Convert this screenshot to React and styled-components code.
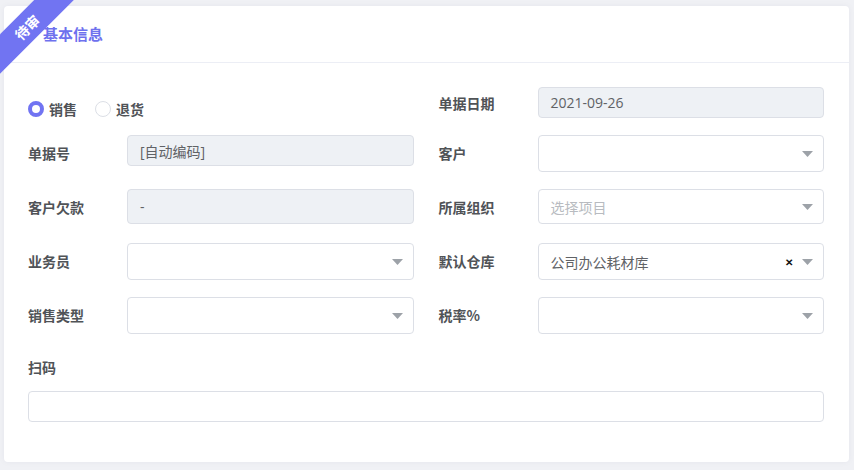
import styled, { createGlobalStyle } from 'styled-components';

const GlobalStyle = createGlobalStyle`
  html, body {
    margin: 0;
    padding: 0;
    background: #f0f1f5;
    overflow: hidden;
    font-family: "Noto Sans CJK SC", "Noto Sans", sans-serif;
  }
`;

const Page = styled.div`
  width: 854px;
  height: 470px;
  padding: 6px 5px 8px 4px;
  box-sizing: border-box;
`;

const Card = styled.section`
  position: relative;
  height: 456px;
  background: #fff;
  border-radius: 4px;
  box-shadow: 0 0 6px rgba(30, 40, 80, 0.05);
`;

const Ribbon = styled.div`
  position: absolute;
  left: -47.5px;
  top: 6.5px;
  width: 140px;
  height: 28px;
  background: #7174f2;
  transform: rotate(-45deg);
  display: flex;
  align-items: center;
  justify-content: center;
  color: #fff;
  font-size: 14px;
  font-weight: 700;
  z-index: 2;
`;

const Header = styled.header`
  height: 57px;
  padding-left: 39px;
  display: flex;
  align-items: center;
  border-bottom: 1px solid #eceef5;
  box-sizing: border-box;
`;

const Title = styled.h2`
  margin: 0 0 1px;
  font-size: 15px;
  font-weight: 700;
  color: #6e71ee;
`;

const Body = styled.div`
  padding: 24px 25px 0 24px;
  display: grid;
  grid-template-columns: 1fr 1fr;
  column-gap: 25px;
`;

const Field = styled.div`
  display: grid;
  grid-template-columns: 99px 1fr;
  height: ${(p) => p.$rowH || 54}px;
  align-items: start;
`;

const Label = styled.label`
  height: ${(p) => p.$h || 36}px;
  display: flex;
  align-items: center;
  font-size: 14px;
  font-weight: 700;
  color: #505357;
`;

const Control = styled.div`
  height: ${(p) => p.$h || 36}px;
  box-sizing: border-box;
  border: 1px solid #dcdfe6;
  border-radius: 4px;
  background: ${(p) => (p.$readonly ? '#eef1f5' : '#fff')};
  display: flex;
  align-items: center;
  padding: 0 10px 0 12px;
  font-family: "Open Sans", "Noto Sans CJK SC", sans-serif;
  font-size: 14px;
  color: ${(p) => (p.$placeholder ? '#b8bbc0' : '#606266')};
`;

const Value = styled.span`
  flex: 1;
  white-space: nowrap;
`;

const Clear = styled.span`
  font-size: 10px;
  font-weight: 700;
  color: #111;
  margin-right: 9px;
`;

const RadioGroup = styled.div`
  grid-column: 1 / 3;
  display: flex;
  align-items: center;
  gap: 18px;
  height: 42px;
  padding-top: 1px;
`;

const RadioItem = styled.span`
  display: flex;
  align-items: center;
  gap: 5px;
  font-size: 14px;
  font-weight: 700;
  color: #505357;
`;

const RadioDot = styled.span`
  width: 16px;
  height: 16px;
  box-sizing: border-box;
  border-radius: 50%;
  background: #fff;
  border: ${(p) => (p.$checked ? '4px solid #7174f2' : '1px solid #dcdfe6')};
`;

const ScanLabel = styled.div`
  grid-column: 1 / 3;
  height: 40px;
  padding-top: 7px;
  box-sizing: border-box;
  line-height: 18px;
  font-size: 14px;
  font-weight: 700;
  color: #505357;
`;

const ScanInput = styled.div`
  grid-column: 1 / 3;
  height: 31px;
  box-sizing: border-box;
  border: 1px solid #dcdfe6;
  border-radius: 4px;
`;

const Caret = () => (
  <svg width="11" height="6" viewBox="0 0 11 6">
    <path d="M0 0 L11 0 L5.5 6 Z" fill="#9da2a8" />
  </svg>
);

const Select = ({ value, placeholder, clearable, h }) => (
  <Control $h={h} $placeholder={!value && !!placeholder}>
    <Value>{value || placeholder}</Value>
    {clearable && <Clear>✕</Clear>}
    <Caret />
  </Control>
);

const App = () => (
  <>
    <GlobalStyle />
    <Page>
      <Card>
        <Ribbon>待审</Ribbon>
        <Header>
          <Title>基本信息</Title>
        </Header>
        <Body>
          <Field $rowH={48}>
            <RadioGroup>
              <RadioItem>
                <RadioDot $checked />
                销售
              </RadioItem>
              <RadioItem>
                <RadioDot />
                退货
              </RadioItem>
            </RadioGroup>
          </Field>
          <Field $rowH={48}>
            <Label $h={31}>单据日期</Label>
            <Control $h={31} $readonly>
              <Value>2021-09-26</Value>
            </Control>
          </Field>

          <Field>
            <Label>单据号</Label>
            <Control $h={31} $readonly>
              <Value>[自动编码]</Value>
            </Control>
          </Field>
          <Field>
            <Label>客户</Label>
            <Select h={37} />
          </Field>

          <Field>
            <Label>客户欠款</Label>
            <Control $h={35} $readonly>
              <Value>-</Value>
            </Control>
          </Field>
          <Field>
            <Label>所属组织</Label>
            <Select h={35} placeholder="选择项目" />
          </Field>

          <Field>
            <Label>业务员</Label>
            <Select h={37} />
          </Field>
          <Field>
            <Label>默认仓库</Label>
            <Select h={37} value="公司办公耗材库" clearable />
          </Field>

          <Field>
            <Label>销售类型</Label>
            <Select h={37} />
          </Field>
          <Field>
            <Label>税率%</Label>
            <Select h={37} />
          </Field>

          <ScanLabel>扫码</ScanLabel>
          <ScanInput />
        </Body>
      </Card>
    </Page>
  </>
);

export default App;
